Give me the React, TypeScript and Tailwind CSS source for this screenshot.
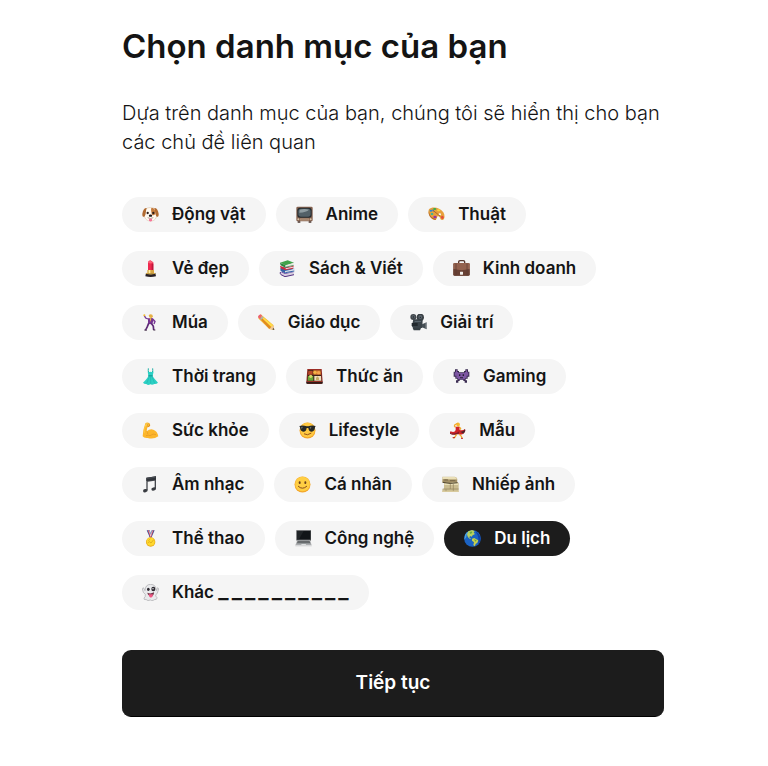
import { useState } from 'react';
import type { ReactNode } from 'react';

type Category = {
  id: string;
  label: string;
  art: ReactNode;
  /** number of fill-in slots drawn after the label */
  blanks?: number;
};

const categories: Category[] = [
  {
    id: 'animals',
    label: 'Động vật',
    art: (
      <>
        <path d="M11 10C15 3 36 3 40 10L44 28C43 41 34 45 26 45S8 41 7 28Z" fill="#fffaf2" stroke="#d3b497" strokeWidth="1.500" />
        <path d="M14 6C7 4 3 12 1 23C0 31 4 35 8 31C12 26 11 14 14 6Z" fill="#b06a31" />
        <path d="M37 6C44 4 48 12 50 23C51 31 47 35 43 31C39 26 40 14 37 6Z" fill="#b06a31" />
        <path d="M28 6C36 4 41 12 40 22C39 30 30 29 29 23C28 18 26 11 28 6Z" fill="#c47b3e" />
        <circle cx="17" cy="21" r="3.500" fill="#2b1c18" />
        <circle cx="34" cy="21" r="3.500" fill="#2b1c18" />
        <ellipse cx="25.500" cy="29" rx="5" ry="3.500" fill="#1d1717" />
        <path d="M17 35Q25 40 34 35" fill="none" stroke="#8d6b58" strokeWidth="2" />
        <path d="M21 38H30V43Q26 50 21 43Z" fill="#f7729a" />
      </>
    ),
  },
  {
    id: 'anime',
    label: 'Anime',
    art: (
      <>
        <rect x="1" y="2" width="49" height="44" rx="4" fill="#83604e" />
        <path d="M5 46H13V50H5ZM38 46H46V50H38Z" fill="#4a352c" />
        <rect x="4" y="5" width="43" height="30" rx="8" fill="#242b2f" />
        <rect x="7" y="8" width="37" height="24" rx="8" fill="#526067" />
        <path d="M11 11Q25 7 39 11Q31 19 10 20Z" fill="#8e9ca1" />
        <rect x="13" y="37" width="25" height="7" fill="#c3a58b" />
        <path d="M15 39H36M15 42H36" stroke="#64493a" strokeWidth="1" />
        <circle cx="7" cy="40" r="3" fill="#d8c4a8" />
        <circle cx="44" cy="40" r="3" fill="#d8c4a8" />
      </>
    ),
  },
  {
    id: 'art',
    label: 'Thuật',
    art: (
      <>
        <path d="M3 10C12 0 36 4 46 19C52 29 50 42 43 42C35 43 38 32 31 31C25 30 29 39 23 41C11 42-3 23 3 10Z" fill="#e7a03b" />
        <path d="M3 15C3 28 14 39 24 38L23 42C10 43-2 26 3 15Z" fill="#b76b24" />
        <path d="M34 22Q40 20 39 27Q33 29 31 25Z" fill="#f5f5f5" />
        <ellipse cx="9" cy="14" rx="4" ry="3" fill="#288bd3" />
        <ellipse cx="20" cy="9" rx="5" ry="3" fill="#39ad49" />
        <ellipse cx="32" cy="13" rx="5" ry="3" fill="#f8d33f" />
        <ellipse cx="12" cy="24" rx="4" ry="3" fill="#28b9a0" />
        <ellipse cx="21" cy="33" rx="5" ry="4" fill="#9732a4" />
        <ellipse cx="43" cy="34" rx="4" ry="5" fill="#e54c3b" />
        <path d="M15 13L37 31" stroke="#8b4b21" strokeWidth="2" />
        <path d="M11 10L18 13L16 17Z" fill="#426bbc" />
      </>
    ),
  },
  {
    id: 'beauty',
    label: 'Vẻ đẹp',
    art: (
      <>
        <path d="M18 32V8Q18 2 25 1L34 7V32Z" fill="#ef294e" />
        <path d="M18 8Q22 1 27 3L34 9Q24 12 18 8Z" fill="#fa6076" />
        <path d="M29 11H34V32H29Z" fill="#bd163b" />
        <path d="M16 30H36V42H16Z" fill="#d9a642" />
        <path d="M20 30H25V42H20Z" fill="#fff0a0" />
        <path d="M12 39Q26 44 40 39L42 49Q26 53 10 49Z" fill="#282025" />
        <path d="M12 40Q26 45 40 40" fill="none" stroke="#d4aa49" strokeWidth="3" />
      </>
    ),
  },
  {
    id: 'books',
    label: 'Sách & Viết',
    art: (
      <>
        <path d="M4 36L30 32L45 38L18 46Z" fill="#6d46a3" />
        <path d="M18 42L46 36L44 45L18 50L5 43V36Z" fill="#d9d0e0" />
        <path d="M4 36Q3 43 6 44L18 50L45 44" fill="none" stroke="#553382" strokeWidth="3" />
        <path d="M5 25L28 20L47 27L20 35Z" fill="#3274bd" />
        <path d="M19 33L46 27L44 35L19 40L6 33Z" fill="#dcdfe9" />
        <path d="M4 23L18 29V39L5 33Z" fill="#3564a6" />
        <path d="M5 30L19 38L46 33" fill="none" stroke="#3564a6" strokeWidth="3" />
        <path d="M3 17L19 23L44 17L42 26L19 31L5 25Z" fill="#c92c3d" />
        <path d="M20 25L42 20V23L20 28Z" fill="#f3dfe0" />
        <path d="M3 8L26 1L45 8L19 17Z" fill="#42a34a" />
        <path d="M19 16L44 9L42 17L20 22L5 15V8Z" fill="#e5e9df" />
        <path d="M3 8L19 15V23L5 16Z" fill="#2c8740" />
        <path d="M19 22L44 16" fill="none" stroke="#237235" strokeWidth="2" />
      </>
    ),
  },
  {
    id: 'business',
    label: 'Kinh doanh',
    art: (
      <>
        <path d="M17 11V5Q17 2 21 2H31Q35 2 35 5V11" fill="none" stroke="#56372f" strokeWidth="4" />
        <rect x="1" y="9" width="49" height="38" rx="4" fill="#805445" />
        <path d="M1 12Q1 9 5 9H46Q50 9 50 12V27Q26 34 1 27Z" fill="#93614e" />
        <path d="M1 27Q26 34 50 27V44Q50 47 46 47H5Q1 47 1 44Z" fill="#674034" />
        <path d="M9 10V46M42 10V46" stroke="#5a3a31" strokeWidth="2" />
        <rect x="21" y="35" width="9" height="9" rx="1" fill="#f0eeea" />
      </>
    ),
  },
  {
    id: 'dance',
    label: 'Múa',
    art: (
      <>
        <path d="M20 4Q24-1 31 2L33 8L28 13L22 10Z" fill="#e5b045" />
        <path d="M18 15L11 12L7 5" fill="none" stroke="#743692" strokeWidth="4" />
        <path d="M18 13L32 12L35 20L30 31L18 30Z" fill="#773693" />
        <path d="M32 15L39 22L36 30" fill="none" stroke="#773693" strokeWidth="4" />
        <path d="M20 28L16 38L11 48M28 28L34 37L35 48" fill="none" stroke="#5d2976" strokeWidth="5" />
        <path d="M23 13L26 24L28 13" fill="#f7bf46" />
        <circle cx="7" cy="4" r="3" fill="#f2b92e" />
        <path d="M7 48L14 49M34 48H40" stroke="#37203d" strokeWidth="3" />
      </>
    ),
  },
  {
    id: 'education',
    label: 'Giáo dục',
    art: (
      <>
        <path d="M1 7L8 1L46 33L49 48L34 45L2 14Z" fill="#f5b62c" />
        <path d="M10 5L45 34L41 40L6 10Z" fill="#ffdc48" />
        <path d="M5 13L9 9L40 40L34 45Z" fill="#e18b20" />
        <path d="M0 8Q3 0 10 2L12 6L5 14Q1 13 0 8Z" fill="#eb6075" />
        <path d="M6 15L13 7L17 10L9 18Z" fill="#a7b0b8" />
        <path d="M34 45L46 33L49 48Z" fill="#efc99b" />
        <path d="M43 46L47 42L49 48Z" fill="#3a3632" />
      </>
    ),
  },
  {
    id: 'cinema',
    label: 'Giải trí',
    art: (
      <>
        <circle cx="10" cy="9" r="9" fill="#42474c" />
        <circle cx="31" cy="10" r="11" fill="#383e43" />
        <circle cx="10" cy="8" r="5" fill="#596269" />
        <circle cx="31" cy="9" r="6" fill="#59636b" />
        <circle cx="10" cy="9" r="2" fill="#20262a" />
        <circle cx="31" cy="10" r="2" fill="#20262a" />
        <path d="M10 16H38L37 42H9Q3 37 7 30Z" fill="#3a4349" />
        <path d="M36 31L50 25V46L36 40Z" fill="#454e54" />
        <path d="M48 26V44" stroke="#a3abaf" strokeWidth="2" />
        <path d="M5 27H23V36H5Z" fill="#22292e" />
        <path d="M8 42H33L30 49H11Z" fill="#353e43" />
        <path d="M14 21H33V24H14Z" fill="#59656d" />
      </>
    ),
  },
  {
    id: 'fashion',
    label: 'Thời trang',
    art: (
      <>
        <path d="M19 1Q18 8 20 13M32 1Q33 8 31 13" fill="none" stroke="#20afa6" strokeWidth="3" />
        <path d="M17 10Q21 14 26 11Q31 14 35 10L32 24Q35 31 48 44Q43 49 37 48Q31 52 25 49Q18 53 13 48Q7 49 3 44Q16 32 19 24Z" fill="#2bd0c4" />
        <path d="M22 26L14 46M26 26V47M30 26L38 46" stroke="#1fb5ad" strokeWidth="2" />
        <path d="M19 22H32V25H19Z" fill="#138d8c" />
      </>
    ),
  },
  {
    id: 'food',
    label: 'Thức ăn',
    art: (
      <>
        <path d="M4 3H47L50 42L47 48H4L1 42Z" fill="#9b2d25" />
        <path d="M6 6H45L47 40H4Z" fill="#3b2119" />
        <path d="M7 8H20V20H6Z" fill="#b94928" />
        <path d="M22 7H44L45 20H22Z" fill="#dd7730" />
        <circle cx="27" cy="13" r="5" fill="#f1b747" />
        <circle cx="38" cy="14" r="5" fill="#f4a54e" />
        <path d="M6 24H22V38H5Z" fill="#69a737" />
        <circle cx="14" cy="25" r="5" fill="#d3d66c" />
        <path d="M25 24H45L46 38H25Z" fill="#f0dfbe" />
        <path d="M30 30L34 25L39 30V36H30Z" fill="#c5aa63" />
        <path d="M1 41H50V47H1Z" fill="#211918" />
        <path d="M3 41H48" stroke="#bf3d2b" strokeWidth="2" />
      </>
    ),
  },
  {
    id: 'gaming',
    label: 'Gaming',
    art: (
      <>
        <path d="M6 4H14V9H18V13H33V9H37V4H45V11H49V26H44V32H38V37H42V44H35V39H31V35H20V39H16V44H9V37H13V32H7V26H2V11H6Z" fill="#392a50" />
        <path d="M9 7H12V12H16V15H35V12H39V7H42V13H46V23H41V30H36V34H15V30H10V23H5V13H9Z" fill="#7d56a3" />
        <path d="M18 19H22V24H18ZM29 19H33V24H29ZM21 28H30V31H21Z" fill="#231d32" />
      </>
    ),
  },
  {
    id: 'health',
    label: 'Sức khỏe',
    art: (
      <>
        <path d="M10 4Q14 0 22 3L25 10Q22 17 16 15L14 28Q24 19 34 23Q46 27 49 43Q35 53 17 48Q5 49 2 43Q2 26 10 4Z" fill="#fcb62b" />
        <path d="M12 6Q16 1 21 5L18 11L11 12Q7 24 8 35Q4 32 10 8Z" fill="#ffd44e" />
        <path d="M14 28Q18 31 17 36M12 41Q19 38 24 41Q34 33 42 38" fill="none" stroke="#e39424" strokeWidth="2" />
        <path d="M16 5V12M20 4L23 12L16 15" fill="none" stroke="#d9821c" strokeWidth="2" />
      </>
    ),
  },
  {
    id: 'lifestyle',
    label: 'Lifestyle',
    art: (
      <>
        <circle cx="25.500" cy="25.500" r="24" fill="#f3a52a" />
        <circle cx="25.500" cy="24" r="22" fill="#ffc941" />
        <path d="M1 12Q12 9 23 13H28Q39 9 50 12L48 16Q47 29 38 29Q29 29 28 18H23Q22 29 13 29Q4 29 3 16Z" fill="#252725" />
        <path d="M6 15L12 14L8 22ZM32 15L38 14L34 22Z" fill="#68706d" />
        <path d="M16 36Q25 42 36 34" fill="none" stroke="#96521b" strokeWidth="3" strokeLinecap="round" />
      </>
    ),
  },
  {
    id: 'model',
    label: 'Mẫu',
    art: (
      <>
        <path d="M22 5Q26-1 31 3Q35 8 30 14L23 13Z" fill="#f7b92e" />
        <path d="M20 15Q14 14 18 8L26 4M30 15Q37 18 34 23" fill="none" stroke="#f2aa2d" strokeWidth="4" />
        <path d="M20 14H31L32 24Q41 27 48 21Q51 29 42 36Q34 41 26 36Q14 39 3 34Q2 30 5 28Q17 33 20 24Z" fill="#ce2228" />
        <path d="M3 32Q17 39 31 28L29 35Q15 42 3 35Z" fill="#811c29" />
        <path d="M34 29Q43 30 48 22Q51 29 43 35Z" fill="#51222a" />
        <path d="M23 37L17 46L12 48M31 37L37 43L39 49" fill="none" stroke="#efac31" strokeWidth="4" />
        <path d="M11 47H18M36 49H42" stroke="#bd2428" strokeWidth="3" />
      </>
    ),
  },
  {
    id: 'music',
    label: 'Âm nhạc',
    art: (
      <>
        <path d="M13 5L42 1V38H38V14L17 17V43H13Z" fill="#45484e" />
        <path d="M13 5L42 1V11L13 15Z" fill="#303339" />
        <ellipse cx="10" cy="44" rx="7" ry="5" transform="rotate(-15 10 44)" fill="#393c41" />
        <ellipse cx="35" cy="39" rx="7" ry="5" transform="rotate(-15 35 39)" fill="#393c41" />
        <path d="M15 7L40 4" stroke="#767b82" strokeWidth="1" />
      </>
    ),
  },
  {
    id: 'personal',
    label: 'Cá nhân',
    art: (
      <>
        <circle cx="25.500" cy="25.500" r="24" fill="#f4a72b" />
        <circle cx="25.500" cy="24" r="22" fill="#ffce43" />
        <ellipse cx="17" cy="20" rx="3" ry="4" fill="#693e1c" />
        <ellipse cx="34" cy="20" rx="3" ry="4" fill="#693e1c" />
        <path d="M13 31Q25 43 38 31" fill="none" stroke="#894a1b" strokeWidth="3" strokeLinecap="round" />
      </>
    ),
  },
  {
    id: 'photo',
    label: 'Nhiếp ảnh',
    art: (
      <>
        <path d="M1 2H38Q45 3 46 9V20H50V48H1V40H6V20H1Z" fill="#cbbd91" />
        <path d="M2 3H38Q43 5 44 9H2ZM7 22H49V27H7Z" fill="#eadfb7" />
        <path d="M2 10Q13 7 20 11H45V18H31Q25 23 13 19L2 18Z" fill="#a39066" />
        <path d="M2 19Q24 25 47 20" fill="none" stroke="#4e442f" strokeWidth="3" />
        <path d="M2 39H50M25 24V39M34 24V46M12 40V48" stroke="#93825c" strokeWidth="2" />
        <path d="M1 46H50" stroke="#ddcea2" strokeWidth="3" />
        <path d="M7 12H18M24 14H40" stroke="#61533a" strokeWidth="2" />
      </>
    ),
  },
  {
    id: 'sports',
    label: 'Thể thao',
    art: (
      <>
        <path d="M14 1L23 1L30 20L24 23Z" fill="#36539d" />
        <path d="M38 1L29 1L22 20L28 23Z" fill="#36539d" />
        <path d="M17 1H20L28 21L25 23ZM32 1H35L27 22L24 20Z" fill="#df4557" />
        <path d="M21 2L27 19M31 2L25 19" stroke="#f4e7e4" strokeWidth="2" />
        <circle cx="26" cy="36" r="14" fill="#e5a715" />
        <circle cx="26" cy="35" r="12" fill="#ffd82e" />
        <path d="M17 39L22 35L27 39L36 28M19 32L25 27" fill="none" stroke="#d39b14" strokeWidth="2" />
      </>
    ),
  },
  {
    id: 'technology',
    label: 'Công nghệ',
    art: (
      <>
        <path d="M4 1H48V31L44 34H8L4 31Z" fill="#4a4c4f" />
        <path d="M6 3H46V28H6Z" fill="#111518" />
        <path d="M6 3H26L12 28H6Z" fill="#202427" />
        <path d="M7 30H45L50 46H1Z" fill="#aaacae" />
        <path d="M9 32H43L46 40H6Z" fill="#56595b" />
        <path d="M9 35H43M8 38H44" stroke="#949799" strokeWidth="1" />
        <path d="M20 42H32L34 46H18Z" fill="#dddfe0" />
        <path d="M1 46H50V49H1Z" fill="#d1d2d3" />
      </>
    ),
  },
  {
    id: 'travel',
    label: 'Du lịch',
    art: (
      <>
        <circle cx="25.500" cy="25.500" r="25" fill="#1b63c4" />
        <path d="M2 18Q5 6 17 3L15 10L8 14L7 22L1 29Z" fill="#4ba3df" />
        <path d="M13 4L24 0L32 3L29 8L33 12L26 16L23 20L18 18L16 23L21 25L18 27L12 22L9 14Z" fill="#b9d05f" />
        <path d="M24 26L31 24L37 28L43 31L40 38L35 42L32 49L28 45L30 37L24 32Z" fill="#c4cf51" />
        <path d="M16 8L22 4L25 8L20 12ZM30 28L38 31L34 35Z" fill="#65aa46" />
        <path d="M34 4Q49 12 50 27Q49 38 41 46Q49 25 34 4Z" fill="#1243a3" />
      </>
    ),
  },
  {
    id: 'other',
    label: 'Khác',
    blanks: 10,
    art: (
      <>
        <path d="M9 20Q10 1 26 1Q42 1 43 20L47 11L50 14L46 28Q40 31 41 36Q49 42 43 46Q37 46 34 49Q29 51 25 48Q17 52 13 47Q4 48 6 42Q11 40 10 31Q3 28 1 15L4 11Z" fill="#e9eaec" stroke="#a8a8ab" strokeWidth="2" />
        <ellipse cx="19" cy="16" rx="4" ry="5" fill="#2d2a31" />
        <ellipse cx="34" cy="15" rx="6" ry="7" fill="#2d2a31" />
        <circle cx="33" cy="14" r="2" fill="#fff" />
        <path d="M16 26Q25 31 36 25Q36 35 28 37Q18 36 16 26Z" fill="#6b3042" />
        <path d="M20 29Q26 32 32 29V37Q28 44 22 38Z" fill="#f05684" />
      </>
    ),
  },
];

function Blanks({ count }: { count: number }) {
  return (
    <span className="inline-flex gap-[3px] text-[22px] leading-none">
      {Array.from({ length: count }, (_, i) => (
        <span key={i}>_</span>
      ))}
    </span>
  );
}

export default function App() {
  const [selected, setSelected] = useState('travel');

  return (
    <main className="min-h-screen bg-white pt-[22px] pr-[104px] pb-12 pl-[122px] font-['Inter',sans-serif] text-[#141414]">
      <h1 className="text-[33px] font-semibold leading-[48px]">Chọn danh mục của bạn</h1>
      <p className="mt-[29px] -mr-3 text-[20px] font-light leading-[29px]">
        Dựa trên danh mục của bạn, chúng tôi sẽ hiển thị cho bạn các chủ đề liên quan
      </p>

      <div className="mt-10 flex flex-wrap gap-x-[10px] gap-y-[19px] pr-10">
        {categories.map((c) => (
          <button
            key={c.id}
            type="button"
            aria-pressed={selected === c.id}
            onClick={() => setSelected(c.id)}
            className={`flex h-[35px] items-center gap-[13px] rounded-full px-5 text-[17px] font-semibold whitespace-nowrap ${
              selected === c.id ? 'bg-[#1c1c1c] text-white' : 'bg-[#f5f5f5]'
            }`}
          >
            <svg viewBox="0 0 51 51" className="size-[17px] shrink-0" aria-hidden>
              {c.art}
            </svg>
            <span>
              {c.label}
              {c.blanks && (
                <>
                  {' '}
                  <Blanks count={c.blanks} />
                </>
              )}
            </span>
          </button>
        ))}
      </div>

      <button
        type="button"
        className="mt-10 h-[67px] w-full rounded-[9px] border-b border-black bg-[#1c1c1c] text-[19px] font-semibold text-white"
      >
        Tiếp tục
      </button>
    </main>
  );
}
